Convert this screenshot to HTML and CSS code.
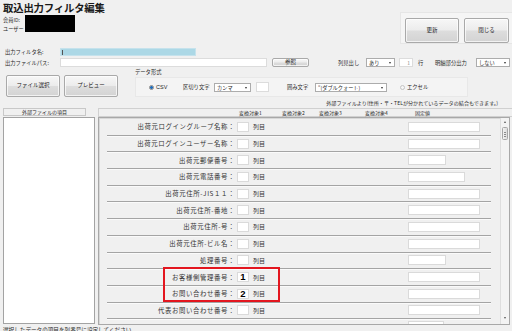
FILE: index.html
```html
<!DOCTYPE html>
<html lang="ja">
<head>
<meta charset="utf-8">
<title>取込出力フィルタ編集</title>
<link rel="stylesheet" href="styles.css">
</head>
<body>
<div class="app">
  <header class="top">
    <div class="head-left">
      <h1 class="title">取込出力フィルタ編集</h1>
      <div class="ids">
        <div class="id-labels"><span>会員ID:</span><span>ユーザー</span></div>
        <div class="redact"></div>
      </div>
    </div>
    <div class="actions">
      <button class="btn btn-lg">更新</button>
      <button class="btn btn-lg btn-close">閉じる</button>
    </div>
  </header>

  <div class="line line-name">
    <span class="lbl">出力フィルタ名:</span>
    <div class="field field-name"><span class="caret"></span></div>
  </div>

  <div class="line line-path">
    <span class="lbl">出力ファイルパス:</span>
    <div class="field field-path"></div>
    <button class="btn btn-sm">参照</button>
    <span class="txt t-hdr">列見出し</span>
    <div class="select sel-hdr">あり</div>
    <div class="field field-num">1</div>
    <span class="txt t-row">行</span>
    <span class="txt t-detail">明細部分出力</span>
    <div class="select sel-detail">しない</div>
  </div>

  <div class="controls">
    <button class="btn btn-md">ファイル選択</button>
    <button class="btn btn-md btn-preview">プレビュー</button>
    <div class="group">
      <div class="legend">データ形式</div>
      <div class="group-panel">
        <span class="radio on"></span>
        <span class="txt t-csv">CSV</span>
        <span class="txt t-sep">区切り文字</span>
        <div class="select sel-sep">カンマ</div>
        <div class="field field-sep"></div>
        <span class="txt t-quote">囲み文字</span>
        <div class="select sel-quote">”(ダブルクォート)</div>
        <span class="radio off"></span>
        <span class="txt t-excel">エクセル</span>
      </div>
    </div>
  </div>

  <div class="note">外部ファイルより(住所・〒・TELが分かれているデータの結合もできます。)</div>

  <div class="main">
    <div class="left-col">
      <div class="left-head">外部ファイルの項目</div>
      <div class="list"></div>
    </div>
    <div class="right-col">
      <div class="right-head">
        <span class="ch ch1">変換対象1</span>
        <span class="ch ch2">変換対象2</span>
        <span class="ch ch3">変換対象3</span>
        <span class="ch ch4">変換対象4</span>
        <span class="ch ch5">固定値</span>
      </div>
      <div class="right-body">
        <div class="rows">
          <div class="row"><span class="rl">出荷元ログイングループ名称：</span><span class="ri"></span><span class="rc">列目</span><span class="rf"></span></div>
          <div class="row"><span class="rl">出荷元ログインユーザー名称：</span><span class="ri"></span><span class="rc">列目</span><span class="rf"></span></div>
          <div class="row"><span class="rl">出荷元郵便番号：</span><span class="ri"></span><span class="rc">列目</span><span class="rf rf-s"></span></div>
          <div class="row"><span class="rl">出荷元電話番号：</span><span class="ri"></span><span class="rc">列目</span><span class="rf rf-m"></span></div>
          <div class="row"><span class="rl">出荷元住所-JIS１１：</span><span class="ri"></span><span class="rc">列目</span><span class="rf"></span></div>
          <div class="row"><span class="rl">出荷元住所-番地：</span><span class="ri"></span><span class="rc">列目</span><span class="rf"></span></div>
          <div class="row"><span class="rl">出荷元住所-号：</span><span class="ri"></span><span class="rc">列目</span><span class="rf"></span></div>
          <div class="row"><span class="rl">出荷元住所-ビル名：</span><span class="ri"></span><span class="rc">列目</span><span class="rf"></span></div>
          <div class="row"><span class="rl">処理番号：</span><span class="ri"></span><span class="rc">列目</span><span class="rf rf-s"></span></div>
          <div class="row"><span class="rl">お客様側管理番号：</span><span class="ri val">1</span><span class="rc">列目</span><span class="rf"></span></div>
          <div class="row"><span class="rl">お問い合わせ番号：</span><span class="ri val">2</span><span class="rc">列目</span><span class="rf"></span></div>
          <div class="row"><span class="rl">代表お問い合わせ番号：</span><span class="ri"></span><span class="rc">列目</span><span class="rf"></span></div>
          <div class="row row-last"><span class="rl"></span><span class="ri"></span><span class="rc"></span><span class="rf rf-xs"></span></div>
        </div>
        <div class="scrollbar">
          <span class="arr arr-up"></span>
          <span class="thumb"></span>
          <span class="arr arr-down"></span>
        </div>
        <div class="highlight"></div>
      </div>
    </div>
  </div>

  <div class="foot">選択したデータの項目を列番号に設定してください。</div>
</div>
</body>
</html>
```

FILE: styles.css
```css
* { box-sizing: border-box; }

html, body {
  margin: 0;
  padding: 0;
}

body {
  width: 512px;
  height: 331px;
  overflow: hidden;
  background: #f0f0f0;
  font-family: "Noto Sans CJK JP", "Noto Sans", sans-serif;
  color: #2a2a2a;
  font-size: 5.5px;
}

.app {
  display: flex;
  flex-direction: column;
  width: 512px;
  height: 331px;
}

/* ---------- header ---------- */
.top {
  height: 46px;
  display: flex;
  justify-content: space-between;
  flex-shrink: 0;
}

.head-left {
  padding: 2px 0 0 3px;
}

.title {
  margin: 0;
  font-size: 10.4px;
  line-height: 12px;
  font-weight: 700;
  color: #1a1a1a;
  letter-spacing: -0.2px;
}

.ids {
  display: flex;
  margin-top: 1px;
}

.id-labels {
  display: flex;
  flex-direction: column;
  width: 22px;
  padding-top: 1px;
  font-size: 5.2px;
  line-height: 8.5px;
}

.redact {
  width: 50px;
  height: 17px;
  background: #000;
}

.actions {
  margin-top: 12px;
  width: 112px;
  height: 32px;
  display: flex;
  gap: 5px;
  padding: 5px 0 0 4px;
  background: #f5f5f5;
  border: 1px solid #e6e6e6;
  border-right: none;
}

/* ---------- buttons ---------- */
.btn {
  font-family: "Noto Sans CJK JP", sans-serif;
  font-size: 5.5px;
  color: #222;
  padding: 0;
  margin: 0;
  border: 1px solid #a9a9a9;
  border-radius: 2px;
  background: linear-gradient(#f7f7f7 0%, #ececec 48%, #dddddd 52%, #d3d3d3 100%);
  box-shadow: inset 0 0 0 1px rgba(255,255,255,0.7);
  display: flex;
  align-items: center;
  justify-content: center;
  line-height: 1;
}

.btn-lg { width: 54px; height: 25px; }
.btn-close { width: 45px; }
.btn-sm { width: 37px; height: 9px; margin-left: 5px; }
.btn-md { width: 54px; height: 22px; }
.btn-preview { margin-left: 4px; }

/* ---------- form lines ---------- */
.line {
  display: flex;
  align-items: center;
  padding-left: 5px;
  flex-shrink: 0;
}

.line-name { margin-top: 1px; height: 10px; }
.line-path { height: 11px; }

.lbl {
  width: 55px;
  font-size: 5.3px;
  line-height: 8px;
  white-space: nowrap;
}

.field {
  height: 9px;
  background: #fff;
  border: 1px solid #dcdcdc;
  font-size: 5px;
  line-height: 7px;
}

.field-name {
  width: 136px;
  height: 8px;
  background: #acd8e6;
  border-color: #c5e2ec;
  position: relative;
}

.caret {
  position: absolute;
  left: 1px;
  top: 1px;
  width: 1px;
  height: 5px;
  background: #555;
}

.field-path { width: 207px; }

.field-num {
  width: 14px;
  margin-left: 4px;
  text-align: right;
  padding-right: 2px;
  color: #888;
}

.field-sep { width: 13px; height: 10px; margin-left: 5px; }

.txt {
  white-space: nowrap;
  font-size: 5.3px;
  line-height: 8px;
}

.t-hdr { margin-left: 29px; width: 28px; }
.t-row { margin-left: 5px; width: 6px; }
.t-detail { margin-left: 11px; width: 41px; }

.select {
  position: relative;
  height: 9px;
  background: #fff;
  border: 1px solid #acacac;
  font-size: 5.2px;
  line-height: 7px;
  padding-left: 2px;
  white-space: nowrap;
}

.select::after {
  content: "";
  position: absolute;
  right: 3px;
  top: 3px;
  border-left: 1.5px solid transparent;
  border-right: 1.5px solid transparent;
  border-top: 2px solid #333;
}

.sel-hdr { width: 29px; }
.sel-detail { width: 34px; }
.sel-sep { width: 37px; margin-left: 3px; }
.sel-quote { width: 72px; margin-left: 6px; }

/* ---------- controls ---------- */
.controls {
  height: 30px;
  display: flex;
  align-items: flex-end;
  padding: 0 0 1px 6px;
  flex-shrink: 0;
}

.group {
  margin-left: 17px;
  width: 333px;
  display: flex;
  flex-direction: column;
}

.legend {
  height: 8px;
  font-size: 5.3px;
  line-height: 7px;
}

.group-panel {
  height: 20px;
  display: flex;
  align-items: center;
  padding-left: 13px;
  background: #f4f4f4;
  border: 1px solid #e8e8e8;
}

.radio {
  width: 5px;
  height: 5px;
  border-radius: 50%;
  border: 1px solid #a0a0a0;
  background: #fff;
  flex-shrink: 0;
}

.radio.on {
  background: radial-gradient(circle, #1d6fc0 0 1.3px, #dfe9f3 1.6px);
  border-color: #8a8a8a;
}

.radio.off {
  margin-left: 13px;
  border-color: #c4c4c4;
  background: #f7f7f7;
}

.t-csv { margin-left: 2px; width: 13px; font-family: "Liberation Sans", sans-serif; font-size: 5.5px; }
.t-sep { margin-left: 14px; width: 28px; }
.t-quote { margin-left: 18px; width: 22px; }
.t-excel { margin-left: 2px; }

/* ---------- note ---------- */
.note {
  height: 9px;
  text-align: right;
  padding-right: 14px;
  font-size: 5.1px;
  line-height: 9px;
  white-space: nowrap;
  flex-shrink: 0;
}

/* ---------- main ---------- */
.main {
  height: 218px;
  display: flex;
  flex-shrink: 0;
}

.left-col {
  margin-left: 3px;
  width: 92px;
  display: flex;
  flex-direction: column;
}

.left-head {
  margin-top: 1px;
  width: 83px;
  height: 8px;
  border: 1px solid #c8c8c8;
  background: #f0f0f0;
  font-size: 5px;
  line-height: 6px;
  text-align: center;
}

.list {
  margin-top: 1px;
  height: 207px;
  background: #fff;
  border: 1px solid #a3a3a3;
}

.right-col {
  margin-left: 3px;
  width: 414px;
  display: flex;
  flex-direction: column;
}

.right-head {
  margin-top: 1px;
  height: 9px;
  display: flex;
  align-items: center;
  padding-left: 140px;
  border: 1px solid #d0d0d0;
  border-right: none;
  font-size: 5px;
  white-space: nowrap;
}

.ch1 { width: 43px; }
.ch2 { width: 37px; }
.ch3 { width: 46px; }
.ch4 { width: 50px; }

.right-body {
  position: relative;
  height: 208px;
  width: 412px;
  display: flex;
  border: 1px solid #a8a8a8;
  box-shadow: inset 1px 1px 0 #d8d8d8;
  overflow: hidden;
}

.rows {
  flex: 1;
  padding-top: 1px;
}

.row {
  margin-left: 8px;
  width: 384px;
  height: 16.7px;
  display: grid;
  grid-template-columns: 130px 12px 159px auto;
  align-items: center;
  border-bottom: 1px solid #a4a4a4;
  box-shadow: 0 1px 0 #fafafa;
}

.rl {
  text-align: right;
  padding-right: 2px;
  font-size: 6.4px;
  letter-spacing: 0.6px;
  white-space: nowrap;
  color: #333;
}

.ri {
  height: 10px;
  background: #fff;
  border: 1px solid #dadada;
  font-family: "Liberation Sans", sans-serif;
  font-weight: 700;
  font-size: 9.5px;
  line-height: 8px;
  text-align: center;
  color: #000;
}

.rc {
  padding-left: 4px;
  font-size: 6px;
  color: #333;
}

.rf {
  width: 72px;
  height: 10px;
  background: #fff;
  border: 1px solid #dadada;
}

.rf-s { width: 38px; }
.rf-m { width: 57px; }
.rf-xs { width: 36px; }

.row-last {
  border-bottom: none;
  box-shadow: none;
  align-items: start;
  padding-top: 2px;
}

.row-last .ri { visibility: hidden; }

.scrollbar {
  width: 9px;
  border-left: 1px solid #dedede;
  background: #f3f3f3;
  position: relative;
  display: flex;
  flex-direction: column;
  align-items: center;
}

.arr {
  width: 0;
  height: 0;
  border-left: 1.5px solid transparent;
  border-right: 1.5px solid transparent;
}

.arr-up {
  margin-top: 3px;
  border-bottom: 2px solid #555;
}

.arr-down {
  margin-top: auto;
  margin-bottom: 5px;
  border-top: 2px solid #555;
}

.thumb {
  margin-top: 4px;
  width: 6px;
  height: 13px;
  border: 1px solid #a6a6a6;
  border-radius: 1.5px;
  background:
    linear-gradient(#8a8a8a, #8a8a8a) center 4px / 2px 1px no-repeat,
    linear-gradient(#8a8a8a, #8a8a8a) center 6px / 2px 1px no-repeat,
    linear-gradient(#8a8a8a, #8a8a8a) center 8px / 2px 1px no-repeat,
    linear-gradient(90deg, #f2f2f2, #dcdcdc);
}

.highlight {
  position: absolute;
  left: 63.5px;
  top: 148.5px;
  width: 117px;
  height: 35.5px;
  border: 2.6px solid #e3161f;
  pointer-events: none;
}

/* ---------- footer ---------- */
.foot {
  margin-top: 1px;
  padding-left: 3px;
  font-size: 5.6px;
  line-height: 8px;
  white-space: nowrap;
  flex-shrink: 0;
}
```
